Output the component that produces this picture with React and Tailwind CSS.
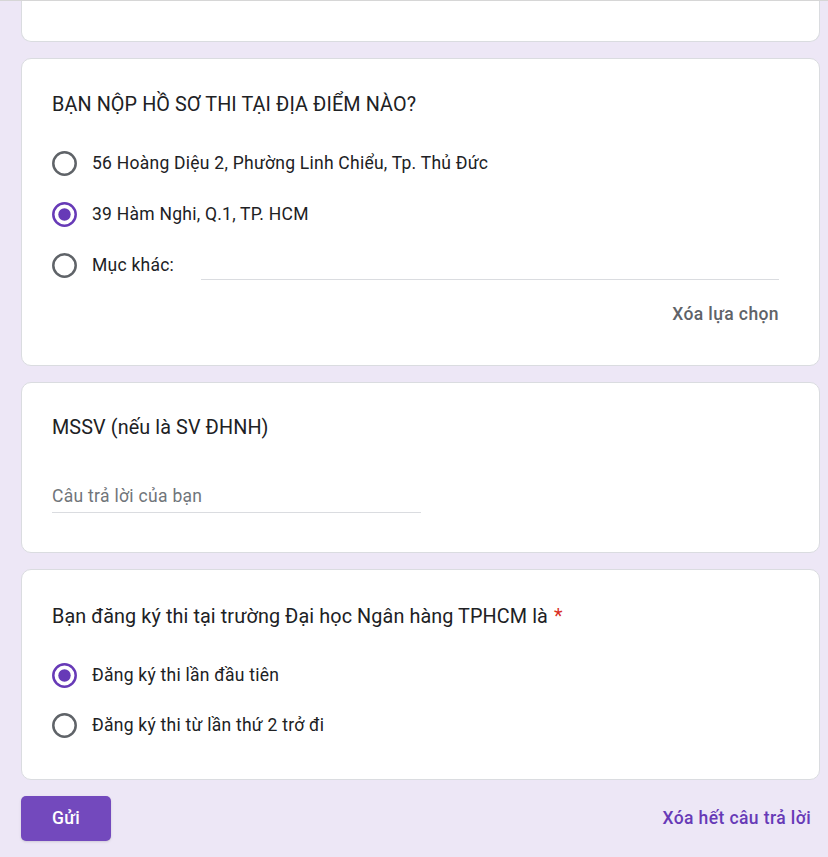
function Radio({ checked }) {
  return (
    <svg width="25" height="25" viewBox="0 0 25 25" className="shrink-0">
      <circle
        cx="12.5"
        cy="12.5"
        r="11.2"
        fill="none"
        stroke={checked ? "#673ab7" : "#5f6368"}
        strokeWidth="2.5"
      />
      {checked && <circle cx="12.5" cy="12.5" r="6.2" fill="#673ab7" />}
    </svg>
  );
}

function Option({ label, checked, h = "h-[51px]", children }) {
  return (
    <div className={`flex items-center ${h}`}>
      <Radio checked={checked} />
      <span className="ml-[15px] text-[17.5px] text-[#202124] tracking-[0.25px]">{label}</span>
      {children}
    </div>
  );
}

export default function App() {
  return (
    <div
      className="min-h-[857px] bg-[#ede7f6] border-t border-[#d6d6d6] pl-[21px] pr-[8px] flex flex-col gap-4"
      style={{ fontFamily: "Roboto, 'Noto Sans', sans-serif" }}
    >
      <div className="h-[41px] bg-white border border-t-0 border-[#dadce0] rounded-b-[10px]" />

      <div className="bg-white border border-[#dadce0] rounded-[10px] pt-[32px] px-[30px] pb-[28px]">
        <div className="h-7 flex items-center text-[19.8px] text-[#202124] tracking-[0.1px]">
          BẠN NỘP HỒ SƠ THI TẠI ĐỊA ĐIỂM NÀO?
        </div>
        <div className="mt-[19px] flex flex-col">
          <Option label="56 Hoàng Diệu 2, Phường Linh Chiểu, Tp. Thủ Đức" />
          <Option label="39 Hàm Nghi, Q.1, TP. HCM" checked />
          <Option label="Mục khác:">
            <div className="ml-[27px] mr-[10px] flex-1 self-end mb-[11px] border-b border-[#dadce0]" />
          </Option>
        </div>
        <div className="h-[46px] flex items-center justify-end pr-[10px]">
          <span className="text-[17.5px] font-medium text-[#5f6368] tracking-[0.4px]">Xóa lựa chọn</span>
        </div>
      </div>

      <div className="bg-white border border-[#dadce0] rounded-[10px] pt-[31px] px-[30px] pb-[39px]">
        <div className="h-7 flex items-center text-[19.8px] text-[#202124] tracking-[0.1px]">
          MSSV (nếu là SV ĐHNH)
        </div>
        <div className="mt-[38px] w-[369px] h-[33px] flex items-center border-b border-[#dadce0]">
          <span className="text-[17.5px] text-[#70757a] tracking-[0.3px]">Câu trả lời của bạn</span>
        </div>
      </div>

      <div className="bg-white border border-[#dadce0] rounded-[10px] pt-[33px] px-[30px] pb-[29px]">
        <div className="h-7 flex items-center text-[19.8px] text-[#202124] tracking-[0.1px]">
          Bạn đăng ký thi tại trường Đại học Ngân hàng TPHCM là
          <span className="ml-[6px] text-[#d93025]">*</span>
        </div>
        <div className="mt-[19px] flex flex-col">
          <Option label="Đăng ký thi lần đầu tiên" checked h="h-[50px]" />
          <Option label="Đăng ký thi từ lần thứ 2 trở đi" h="h-[50px]" />
        </div>
      </div>

      <div className="flex items-center justify-between pr-[9px]">
        <button className="w-[90px] h-[45px] rounded-[5px] bg-[#7349bd] text-white text-[17.5px] font-medium tracking-[0.3px] shadow-sm">
          Gửi
        </button>
        <span className="text-[17.5px] font-medium text-[#673ab7] tracking-[0.4px]">Xóa hết câu trả lời</span>
      </div>
    </div>
  );
}
